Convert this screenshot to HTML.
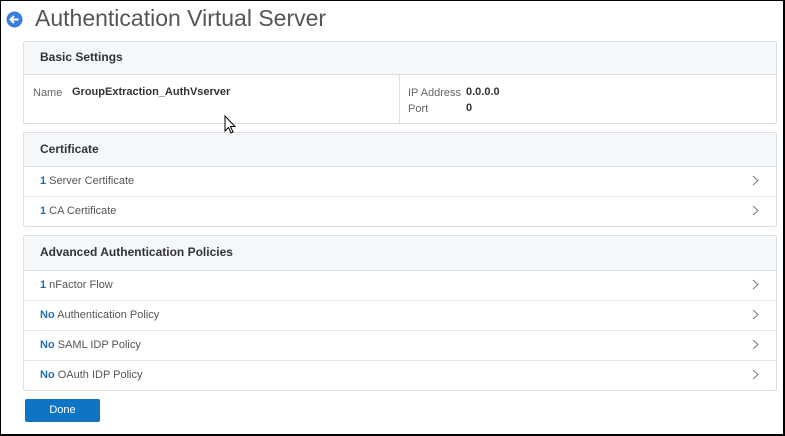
<!DOCTYPE html>
<html><head><style>
*{box-sizing:border-box;margin:0;padding:0}
body{width:785px;height:436px;background:#fff;font-family:"Liberation Sans",sans-serif;position:relative;overflow:hidden}
.frame{position:absolute;left:0;top:0;width:785px;height:436px;border:1px solid #000;border-right:2px solid #000;border-bottom:2px solid #000}
.title{position:absolute;left:35px;top:5px;font-size:23px;color:#555}
.back{position:absolute;left:6px;top:11px}
.panel{position:absolute;left:23px;width:754px;border:1px solid #dcdfe3;border-radius:2px;background:#fff}
.hd{background:#f5f8fb;border-bottom:1px solid #dcdfe3;font-size:12px;font-weight:bold;color:#333;padding-left:16px}
.row{height:30px;border-top:1px solid #e4e6e8;font-size:11px;color:#555;padding-left:16px;line-height:29px;position:relative}
.hd+.row{border-top:none;height:29px}
.row b{color:#1f6fb5}
.chev{position:absolute;right:16px;top:8px}
.lbl{font-size:11px;color:#666;position:absolute}
.val{font-size:11px;color:#333;font-weight:bold;position:absolute}
.btn{position:absolute;left:25px;top:399px;width:75px;height:23px;background:#0e74c4;border-radius:2px;color:#fff;font-size:11px;text-align:center;line-height:23px}
</style></head><body>
<svg class="back" width="17" height="17" viewBox="0 0 17 17"><circle cx="8.5" cy="8.5" r="8" fill="#3b7dd8"/><path d="M12.5 8.5H5M8 5L4.5 8.5L8 12" stroke="#fff" stroke-width="2" fill="none"/></svg>
<div class="title">Authentication Virtual Server</div>
<div class="panel" style="top:41px;height:83px">
<div class="hd" style="height:33px;line-height:31px">Basic Settings</div>
<div style="position:absolute;left:375px;top:33px;bottom:0;border-left:1px solid #dcdfe3"></div>
<span class="lbl" style="left:9px;top:45px">Name</span>
<span class="val" style="left:48px;top:44px">GroupExtraction_AuthVserver</span>
<span class="lbl" style="left:384px;top:45px">IP Address</span>
<span class="val" style="left:442px;top:44px">0.0.0.0</span>
<span class="lbl" style="left:384px;top:61px">Port</span>
<span class="val" style="left:442px;top:60px">0</span>
</div>
<div class="panel" style="top:132px;height:95px">
<div class="hd" style="height:34px;line-height:32px">Certificate</div>
<div class="row"><b>1</b> Server Certificate<svg class="chev" width="8" height="12"><path d="M1 1L6 5.5L1 10" stroke="#777" fill="none"/></svg></div>
<div class="row"><b>1</b> CA Certificate<svg class="chev" width="8" height="12"><path d="M1 1L6 5.5L1 10" stroke="#777" fill="none"/></svg></div>
</div>
<div class="panel" style="top:235px;height:156px">
<div class="hd" style="height:35px;line-height:33px">Advanced Authentication Policies</div>
<div class="row"><b>1</b> nFactor Flow<svg class="chev" width="8" height="12"><path d="M1 1L6 5.5L1 10" stroke="#777" fill="none"/></svg></div>
<div class="row"><b>No</b> Authentication Policy<svg class="chev" width="8" height="12"><path d="M1 1L6 5.5L1 10" stroke="#777" fill="none"/></svg></div>
<div class="row"><b>No</b> SAML IDP Policy<svg class="chev" width="8" height="12"><path d="M1 1L6 5.5L1 10" stroke="#777" fill="none"/></svg></div>
<div class="row"><b>No</b> OAuth IDP Policy<svg class="chev" width="8" height="12"><path d="M1 1L6 5.5L1 10" stroke="#777" fill="none"/></svg></div>
</div>
<div class="btn">Done</div>
<svg style="position:absolute;left:224px;top:115px" width="13" height="20"><path d="M1 1V16L4.5 12.5L7 18L9 17L6.5 11.5H11Z" fill="#fff" stroke="#000"/></svg>
<div class="frame"></div>
</body></html>
